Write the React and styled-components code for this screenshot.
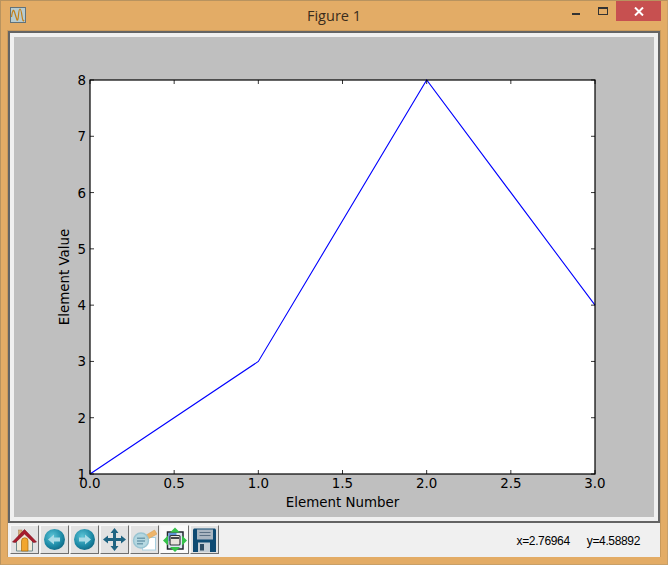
import React from "react";
import styled, { createGlobalStyle } from "styled-components";

const Global = createGlobalStyle`
  html, body { margin: 0; padding: 0; background: #e3ac66; }
  #root { width: 668px; height: 565px; }
`;

const Window = styled.div`
  box-sizing: border-box;
  width: 668px;
  height: 565px;
  background: #e3ac66;
  border: 1px solid #b8935f;
  border-right-color: #c9a068;
  border-bottom-color: #c9a068;
  display: flex;
  flex-direction: column;
  font-family: "Liberation Sans", Arial, sans-serif;
  overflow: hidden;
`;

const TitleBar = styled.header`
  position: relative;
  height: 29px;
  flex: none;
  display: flex;
  align-items: flex-start;
  padding-left: 9px;
`;

const AppIcon = styled.svg`
  width: 16px;
  height: 16px;
  margin-top: 6px;
  flex: none;
`;

const Title = styled.div`
  position: absolute;
  left: 0;
  right: 0;
  top: 6px;
  text-align: center;
  font-family: "Open Sans", "Noto Sans", sans-serif;
  font-size: 14.5px;
  line-height: 18px;
  color: #3a2c1c;
`;

const Controls = styled.div`
  margin-left: auto;
  margin-right: 6px;
  display: flex;
  align-items: flex-start;
`;

const Control = styled.div`
  box-sizing: border-box;
  width: ${(p) => p.$w}px;
  height: 20px;
  display: flex;
  align-items: ${(p) => (p.$low ? "flex-end" : "center")};
  justify-content: center;
  padding: ${(p) => (p.$low ? "0 0 6px 3px" : "0")};
  background: ${(p) => (p.$close ? "#c75050" : "transparent")};
`;

const Client = styled.main`
  box-sizing: border-box;
  flex: none;
  width: 654px;
  height: 527px;
  margin-left: 6px;
  border-top: 1px solid #c99a5c;
  border-left: 1px solid #c99a5c;
  border-right: 1px solid #c99a5c;
  display: flex;
  flex-direction: column;
  background: #f0f0f0;
`;

const CanvasFrame = styled.section`
  flex: none;
  border: 2px solid #646464;
  background: #f0f0f0;
  padding: 4px;
  width: 652px;
  height: 492px;
  box-sizing: border-box;
`;

const Chart = styled.svg`
  display: block;
  width: 640px;
  height: 480px;
  background: #bfbfbf;
`;

const TickLabel = styled.text`
  font-family: "DejaVu Sans", sans-serif;
  font-size: 13.4px;
  fill: #000;
`;

const ToolBar = styled.footer`
  flex: 1;
  box-sizing: border-box;
  display: flex;
  align-items: flex-start;
  padding: 2px 0 0 2px;
  gap: 1px;
  background: #f0f0f0;
`;

const ToolButton = styled.button`
  box-sizing: border-box;
  width: 29px;
  height: 29px;
  padding: 0;
  display: flex;
  align-items: center;
  justify-content: center;
  border: 1px solid;
  border-color: #f8f8f8 #6f6f6f #6f6f6f #f8f8f8;
  background: ${(p) => (p.$on ? "#fafafa" : "#e2e2e2")};
`;

const ToolIcon = styled.svg`
  width: 25px;
  height: 25px;
  display: block;
`;

const Coords = styled.div`
  margin-left: auto;
  margin-right: 20px;
  margin-top: 8px;
  display: flex;
  gap: 17px;
  font-family: "Liberation Sans", Arial, sans-serif;
  font-size: 12px;
  line-height: 16px;
  letter-spacing: -0.35px;
  color: #000;
`;

const OX = 76, OY = 43, W = 505, H = 394;
const xp = (v) => OX + (v / 3) * W;
const yp = (v) => OY + H - ((v - 1) / 7) * H;
const data = [[0, 1], [1, 3], [2, 8], [3, 4]];
const xTicks = [0, 0.5, 1, 1.5, 2, 2.5, 3];
const yTicks = [1, 2, 3, 4, 5, 6, 7, 8];

function Plot() {
  return (
    <Chart viewBox="0 0 640 480">
      <rect x={OX} y={OY} width={W} height={H} fill="#fff" />
      <polyline
        points={data.map(([x, y]) => `${xp(x)},${yp(y)}`).join(" ")}
        fill="none"
        stroke="#0000ff"
        strokeWidth="1.1"
      />
      <rect x={OX} y={OY} width={W} height={H} fill="none" stroke="#000" strokeWidth="1.2" />
      {xTicks.map((t) => (
        <g key={t}>
          <path d={`M${xp(t)} ${OY}v4M${xp(t)} ${OY + H}v-4`} stroke="#000" strokeWidth="0.8" fill="none" />
          <TickLabel x={xp(t)} y={OY + H + 14} textAnchor="middle">{t.toFixed(1)}</TickLabel>
        </g>
      ))}
      {yTicks.map((t) => (
        <g key={t}>
          <path d={`M${OX} ${yp(t)}h4M${OX + W} ${yp(t)}h-4`} stroke="#000" strokeWidth="0.8" fill="none" />
          <TickLabel x={OX - 4} y={yp(t) + 5} textAnchor="end">{t}</TickLabel>
        </g>
      ))}
      <TickLabel x={OX + W / 2} y={470} textAnchor="middle">Element Number</TickLabel>
      <TickLabel transform={`translate(55 ${OY + H / 2}) rotate(-90)`} textAnchor="middle">Element Value</TickLabel>
    </Chart>
  );
}

const icons = {
  home: (
    <>
      <rect x="6.5" y="3" width="3.5" height="8" fill="#d8ae78" stroke="#a8784a" strokeWidth="0.5" />
      <path d="M4.5 13v11h16V13L12.5 6z" fill="#f1ead8" stroke="#6f8a8c" strokeWidth="1" />
      <path d="M9.5 24V14a3 3 0 0 1 6.5 0v10z" fill="#f2a62e" stroke="#a86a10" strokeWidth="0.7" />
      <path d="M0.5 15 12.5 2.5 24.5 15 21.5 15.5 12.5 7 3.5 15.5z" fill="#a81c2c" stroke="#7a1020" strokeWidth="0.6" />
    </>
  ),
  back: (
    <>
      <circle cx="12.5" cy="12.5" r="10.5" fill="url(#teal)" />
      <path d="M6 12.5 12 7.5v3h6v4h-6v3z" fill="#a9dbe6" />
    </>
  ),
  forward: (
    <>
      <circle cx="12.5" cy="12.5" r="10.5" fill="url(#teal)" />
      <path d="M19 12.5 13 7.5v3H7v4h6v3z" fill="#a9dbe6" />
    </>
  ),
  move: (
    <path
      d="M12.5 1 16.5 6H14v5h5V8.5l5 4-5 4V14h-5v5h2.5l-4 5-4-5H11v-5H6v2.5l-5-4 5-4V11h5V6H8.5z"
      fill="#1f6482"
    />
  ),
  zoom: (
    <>
      <rect x="10.5" y="10.5" width="13" height="12.5" fill="#fff" stroke="#a8d0e0" strokeWidth="1" />
      <path d="M11 10 22.5 3 25 7 13.5 13.5z" fill="#eeb56a" stroke="#d49a50" strokeWidth="0.5" />
      <circle cx="9" cy="13.5" r="7.5" fill="#b0d6e0" fillOpacity="0.92" stroke="#98c4d2" strokeWidth="1.4" />
      <path d="M5 10.5h8v1.6H5zM5 13.2h8v1.6H5zM5 15.9h6v1.6H5z" fill="#6f9cae" />
    </>
  ),
  subplots: (
    <>
      <rect x="5.5" y="5" width="15.5" height="17" fill="#dfe8f2" stroke="#20262e" strokeWidth="1.5" />
      <rect x="6.5" y="6" width="8" height="8" fill="#5d92d8" />
      <rect x="8" y="8.5" width="10" height="9.5" rx="1" fill="#e8e4dc" stroke="#30343a" strokeWidth="1.2" />
      <path d="M9 11h8" stroke="#30343a" strokeWidth="1.8" />
      <path d="M13 0.5 18 5.5H8zM13 25 18 20H8zM1 13.5 6 8.5v10zM25 13.5 20 8.5v10z" fill="#35c24a" />
    </>
  ),
  save: (
    <>
      <path d="M2 1.5h21l1 1V25H1V2.5z" fill="#0e4a72" />
      <rect x="5" y="2.5" width="16" height="10" fill="#a9b6c1" />
      <path d="M7.5 5.5h11M7.5 8.5h11" stroke="#5b7184" strokeWidth="1" />
      <rect x="6" y="15.5" width="12" height="9.5" fill="#c4cdd5" />
      <rect x="8" y="17" width="4" height="6.5" fill="#2c4a62" />
    </>
  ),
};

const tools = [
  { id: "home" },
  { id: "back" },
  { id: "forward" },
  { id: "move" },
  { id: "zoom" },
  { id: "subplots", on: true },
  { id: "save" },
];

export default function App() {
  return (
    <>
      <Global />
      <Window>
        <TitleBar>
          <AppIcon viewBox="0 0 16 16">
            <rect x="0.5" y="0.5" width="15" height="15" fill="#b8ccd0" stroke="#62727a" />
            <path d="M1.5 10Q3 0 4.5 5T7 13Q8 14 8.5 8T10 2Q11 2 12 9T14 13" fill="none" stroke="#c47f18" strokeWidth="1.2" />
          </AppIcon>
          <Title>Figure 1</Title>
          <Controls>
            <Control $w={29} $low>
              <svg width="8" height="2" viewBox="0 0 8 2"><rect width="8" height="2" fill="#333" /></svg>
            </Control>
            <Control $w={27}>
              <svg width="10" height="8" viewBox="0 0 10 8"><rect x="0.5" y="1" width="9" height="6.5" fill="none" stroke="#333" /><rect width="10" height="2" fill="#333" /></svg>
            </Control>
            <Control $w={45} $close>
              <svg width="10" height="9" viewBox="0 0 10 9"><path d="M1 .5l8 8M9 .5l-8 8" stroke="#fff" strokeWidth="2" fill="none" /></svg>
            </Control>
          </Controls>
        </TitleBar>
        <Client>
          <CanvasFrame>
            <Plot />
          </CanvasFrame>
          <ToolBar>
            <svg width="0" height="0" style={{ position: "absolute" }}>
              <defs>
                <radialGradient id="teal" cx="0.4" cy="0.35" r="0.75">
                  <stop offset="0" stopColor="#5cc4d6" />
                  <stop offset="0.6" stopColor="#1e8ca8" />
                  <stop offset="1" stopColor="#0c5f7c" />
                </radialGradient>
              </defs>
            </svg>
            {tools.map((t) => (
              <ToolButton key={t.id} $on={t.on}>
                <ToolIcon viewBox="0 0 25 25">{icons[t.id]}</ToolIcon>
              </ToolButton>
            ))}
            <Coords>
              <span>x=2.76964</span>
              <span>y=4.58892</span>
            </Coords>
          </ToolBar>
        </Client>
      </Window>
    </>
  );
}
